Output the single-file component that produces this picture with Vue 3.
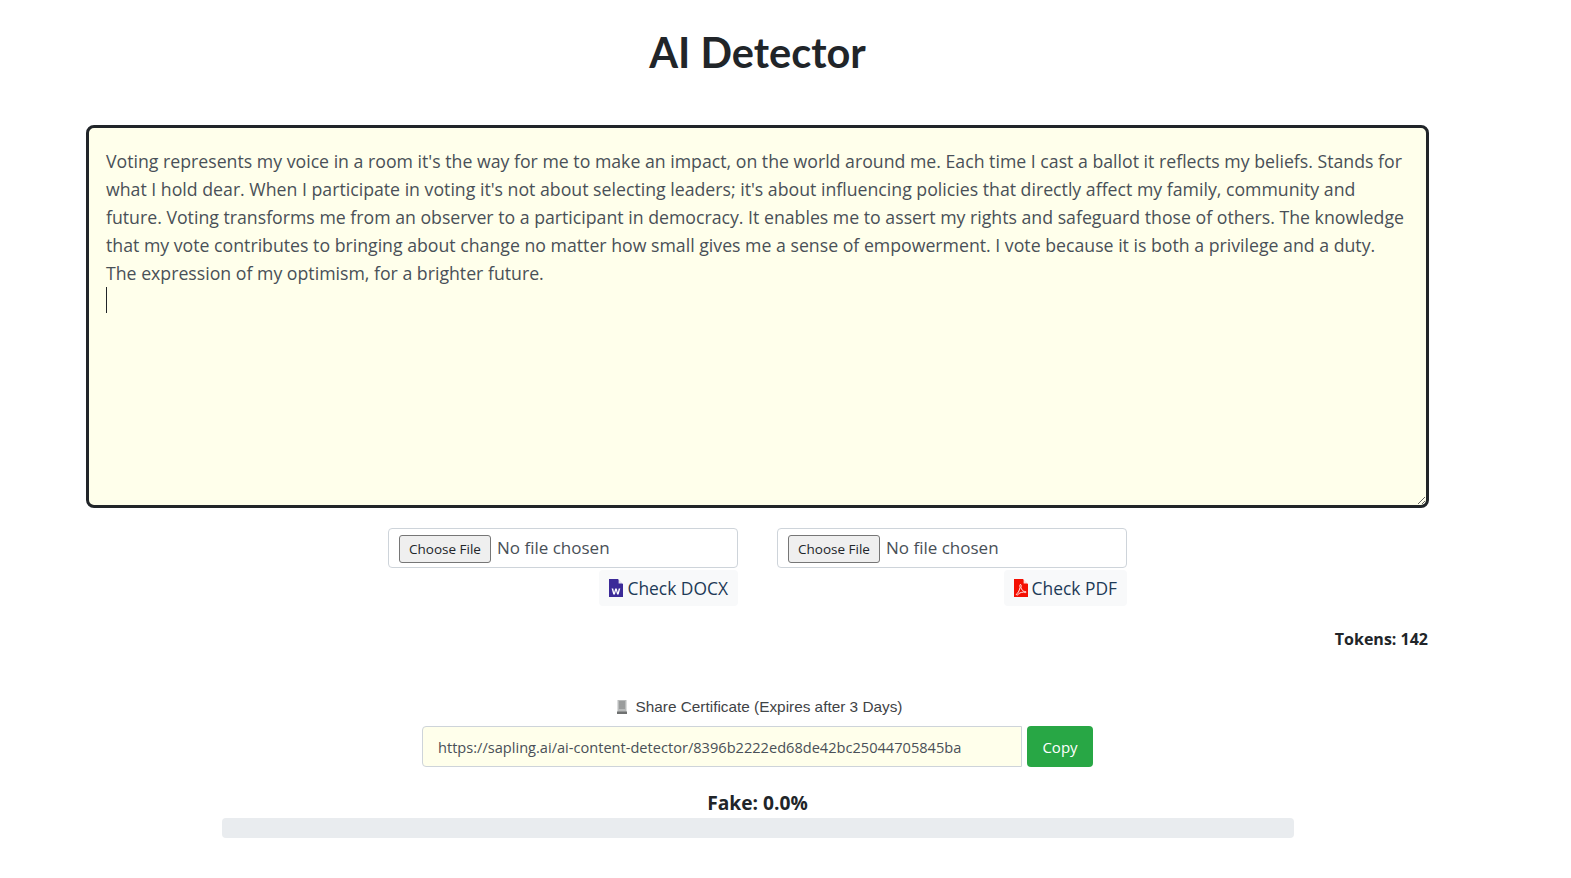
<script setup>
import { ref } from "vue";

const essay = ref(
	"Voting represents my voice in a room it's the way for me to make an impact, on the world around me. Each time I cast a ballot it reflects my beliefs. Stands for\n" +
		"what I hold dear. When I participate in voting it's not about selecting leaders; it's about influencing policies that directly affect my family, community and\n" +
		"future. Voting transforms me from an observer to a participant in democracy. It enables me to assert my rights and safeguard those of others. The knowledge\n" +
		"that my vote contributes to bringing about change no matter how small gives me a sense of empowerment. I vote because it is both a privilege and a duty.\n" +
		"The expression of my optimism, for a brighter future.\n"
);
const shareUrl = ref("https://sapling.ai/ai-content-detector/8396b2222ed68de42bc25044705845ba");
const tokens = ref(142);
const fakeScore = ref(0);
</script>

<template>
	<main class="page">
		<h1 class="title">AI Detector</h1>

		<div class="editor">
			<textarea v-model="essay" class="essay" spellcheck="false" wrap="off"></textarea>
			<span class="caret"></span>
		</div>

		<div class="uploads">
			<div class="upload">
				<input type="file" class="file" accept=".docx" />
				<button class="check" type="button">
					<svg class="doc-icon" viewBox="0 0 14 18" width="14" height="18">
						<path d="M0 0h9l5 5v13H0z" fill="#3b2a98" />
						<path d="M9.6 0 14 4.4H9.6z" fill="#fff" opacity="0.85" />
						<path d="M2.6 9.5h1.6l.9 4 1.1-4h1.5l1.1 4 .9-4h1.6l-1.7 6H8.1L7 11.6 5.9 15.5H4.3z" fill="#fff" />
					</svg>
					Check DOCX
				</button>
			</div>
			<div class="upload">
				<input type="file" class="file" accept=".pdf" />
				<button class="check" type="button">
					<svg class="doc-icon" viewBox="0 0 14 18" width="14" height="18">
						<path d="M0 0h9l5 5v13H0z" fill="#f40f02" />
						<path d="M9.6 0 14 4.4H9.6z" fill="#fff" opacity="0.85" />
						<path d="M2.2 15.4c1.6-.9 3-3.4 3.9-6.9-.5-1.700-.4-3 .4-3s.9 1.500.4 3.300c.8 1.900 2 3.100 3 3.700 1.200-.2 2.200 0 2.200.6 0 .7-1.500.7-2.600 0-1.400.1-2.900.5-4.100 1-1.200 1.900-2.700 2.500-3.200 1.300z" fill="none" stroke="#fff" stroke-width="0.9" />
					</svg>
					Check PDF
				</button>
			</div>
		</div>

		<p class="tokens">Tokens: {{ tokens }}</p>

		<p class="share-label">
			<svg class="receipt" viewBox="0 0 12 16" width="12" height="16">
				<path d="M1.500 1h9v14h-9z" fill="#b9bbbb" />
				<path d="M3 3h6M3 5h6M3 7h6M3 9h6" stroke="#7c7e7e" stroke-width="1" />
				<path d="M1 12.500h10v2.500H1z" fill="#6f7171" />
			</svg>
			Share Certificate (Expires after 3 Days)
		</p>
		<div class="share-row">
			<input class="share-url" type="text" readonly :value="shareUrl" />
			<button class="copy" type="button">Copy</button>
		</div>

		<p class="fake">Fake: {{ fakeScore.toFixed(1) }}%</p>
		<div class="progress"><div class="progress-bar" :style="{ width: fakeScore + '%' }"></div></div>
	</main>
</template>

<style scoped>
.page {
	width: 1343px;
	margin-left: 86px;
	padding-top: 24px;
	display: flex;
	flex-direction: column;
	align-items: center;
	font-family: "Open Sans", "Noto Sans", sans-serif;
	color: #212529;
}

.title {
	margin: 0 0 45px;
	font-family: Lato, sans-serif;
	font-size: 41.5px;
	line-height: 56px;
	font-weight: 700;
	color: #212529;
}

.editor {
	position: relative;
	width: 100%;
	height: 383px;
}

.essay {
	display: block;
	box-sizing: border-box;
	width: 100%;
	height: 100%;
	padding: 18.5px 17px;
	border: 3px solid #212529;
	border-radius: 8px;
	outline: none;
	overflow: hidden;
	background: #ffffeb;
	color: #495057;
	font-family: "Open Sans", sans-serif;
	font-size: 17.72px;
	line-height: 28.1px;
}

.caret {
	position: absolute;
	left: 20px;
	top: 162px;
	width: 1px;
	height: 26px;
	background: #212529;
}

.uploads {
	display: flex;
	gap: 39px;
	margin-top: 20px;
}

.upload {
	width: 350px;
	display: flex;
	flex-direction: column;
	align-items: flex-end;
	gap: 2px;
}

.file {
	box-sizing: border-box;
	width: 100%;
	height: 40px;
	padding: 6px 10px;
	border: 1px solid #ced4da;
	border-radius: 4px;
	color: #495057;
	font-family: "Open Sans", sans-serif;
	font-size: 17px;
}

.file::file-selector-button {
	height: 28px;
	width: 92px;
	margin-right: 6px;
	font-family: "Open Sans", sans-serif;
	font-size: 13.5px;
	color: #212529;
	background: #efefef;
	border: 1px solid #767676;
	border-radius: 3px;
}

.check {
	display: flex;
	align-items: center;
	gap: 4px;
	height: 36px;
	padding: 0 10px;
	border: none;
	border-radius: 4px;
	background: #f8f9fa;
	color: #1d3a57;
	font-family: "Open Sans", sans-serif;
	font-size: 17.4px;
}

.doc-icon {
	flex: none;
}

.tokens {
	align-self: flex-end;
	margin: 21px 1px 0 0;
	font-size: 16px;
	line-height: 24px;
	font-weight: 700;
}

.share-label {
	display: flex;
	align-items: center;
	gap: 8px;
	margin: 45px 0 0 3px;
	font-family: "Liberation Sans", sans-serif;
	font-size: 15.35px;
	line-height: 22px;
	color: #3f4346;
}

.receipt {
	flex: none;
}

.share-row {
	display: flex;
	gap: 5px;
	margin-top: 8px;
}

.share-url {
	box-sizing: border-box;
	width: 600px;
	height: 41px;
	padding: 0 15px;
	border: 1px solid #ced4da;
	border-radius: 4px 0 0 4px;
	outline: none;
	background: #ffffeb;
	color: #495057;
	font-family: "Open Sans", sans-serif;
	font-size: 14.6px;
}

.copy {
	width: 66px;
	height: 41px;
	border: none;
	border-radius: 4px;
	background: #28a745;
	color: #fff;
	font-family: "Open Sans", sans-serif;
	font-size: 15px;
	font-weight: 500;
}

.fake {
	margin: 23px 0 0;
	font-size: 19.2px;
	line-height: 26px;
	font-weight: 700;
}

.progress {
	width: 1072px;
	height: 20px;
	margin-top: 2px;
	border-radius: 4px;
	background: #e9ecef;
	overflow: hidden;
}

.progress-bar {
	height: 100%;
	background: #28a745;
}
</style>

<style>
body {
	background: #fff;
}
</style>
